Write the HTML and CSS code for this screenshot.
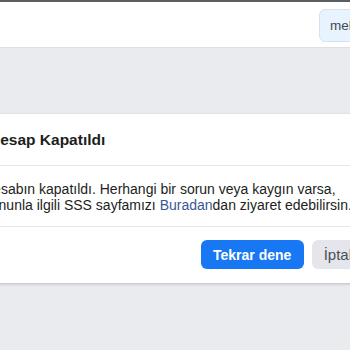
FILE: index.html
```html
<!DOCTYPE html>
<html lang="tr">
  <head>
    <meta charset="UTF-8" />
    <meta name="viewport" content="width=device-width, initial-scale=1.0" />
    <title>Hesap Kapatıldı</title>
    <link rel="stylesheet" href="styles.css">
  </head>
  <body>
    <div class="topbar">
      <button class="account">mehmet</button>
    </div>
    <div class="page">
      <div class="dialog">
        <div class="dialog-head">
          <h2>Hesap Kapatıldı</h2>
        </div>
        <div class="dialog-body">
          Hesabın kapatıldı. Herhangi bir sorun veya kaygın varsa,<br />
          bununla ilgili SSS sayfamızı <a href="#">Buradan</a>dan ziyaret edebilirsin.
        </div>
        <div class="dialog-foot">
          <button class="btn btn-primary">Tekrar dene</button>
          <button class="btn btn-grey">İptal</button>
        </div>
      </div>
    </div>
  </body>
</html>
```

FILE: styles.css
```css
* {
  box-sizing: border-box;
}
html,
body {
  margin: 0;
  padding: 0;
  background-color: #e9ebee;
  font-family: "Liberation Sans", Arial, sans-serif;
  overflow: hidden;
}
body {
  border-top: 2px solid #5b5e63;
  height: 350px;
}
.topbar {
  background: #fff;
  height: 46px;
  border-bottom: 1px solid #dddfe2;
  padding: 7px 0 0 319px;
  white-space: nowrap;
}
.account {
  height: 33px;
  padding: 0 10px;
  background: #e7f3ff;
  border: 1px solid #d8e2ee;
  border-radius: 6px;
  color: #444950;
  font-family: inherit;
  font-size: 13.5px;
}
.page {
  margin: 66px 0 0 -24px;
  width: 400px;
}
.dialog {
  background: #fff;
  box-shadow: 0 1px 3px rgba(0, 0, 0, 0.2);
}
.dialog-head {
  height: 52px;
  padding: 0 13px;
  display: flex;
  align-items: center;
  border-bottom: 1px solid #e5e6e9;
}
.dialog-head h2 {
  margin: 0;
  font-size: 15.5px;
  color: #1c1e21;
}
.dialog-body {
  padding: 15px 12px 15px 7px;
  height: 61px;
  font-size: 14px;
  line-height: 16px;
  color: #1c1e21;
  white-space: nowrap;
  border-bottom: 1px solid #e5e6e9;
}
.dialog-body a {
  color: #385898;
  text-decoration: none;
}
.dialog-foot {
  display: flex;
  justify-content: flex-end;
  gap: 8px;
  padding: 13px 12px 14px;
}
.btn {
  height: 29px;
  padding: 0 12px;
  border: none;
  border-radius: 6px;
  font-family: inherit;
  font-size: 14px;
  font-weight: bold;
}
.btn-primary {
  background: #1877f2;
  color: #fff;
  width: 103px;
}
.btn-grey {
  background: #e4e6eb;
  color: #4b4f56;
  font-weight: normal;
  font-size: 15px;
}
```
